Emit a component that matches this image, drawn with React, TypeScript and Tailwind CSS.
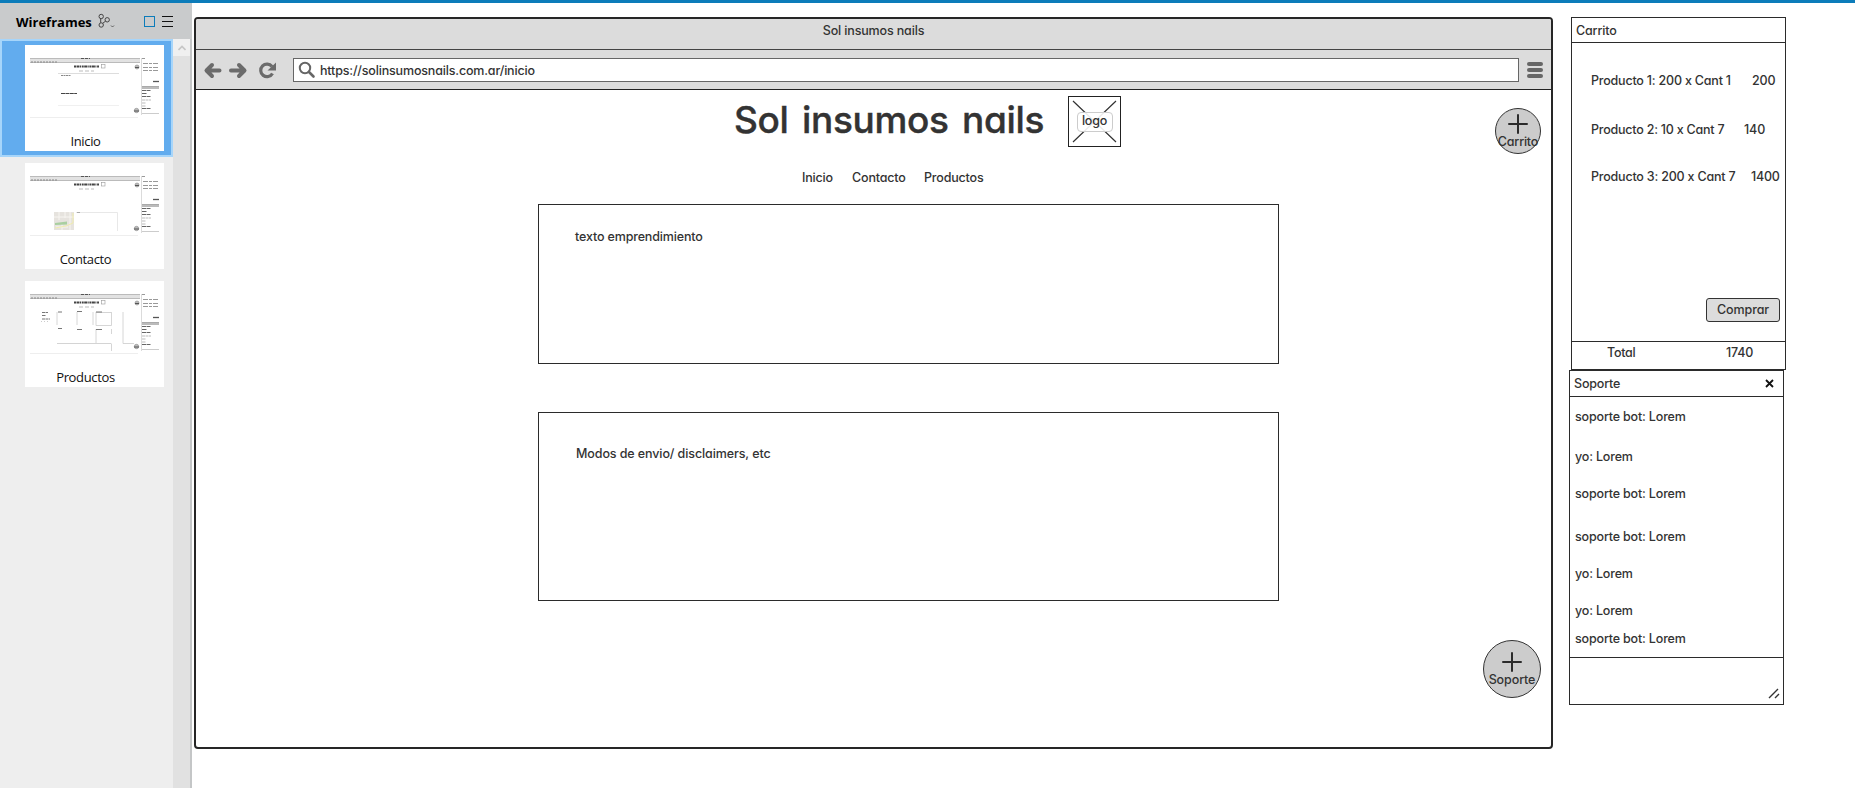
import React from "react";

function Toolbar() {
  return (
    <div className="flex h-[40px] items-center border-b border-[#222] bg-[#dcdcdc] pl-[6px]">
      <svg className="h-[24px] w-[83px] shrink-0" viewBox="0 0 83 24" fill="none" stroke="#6b6b6b">
        <path d="M17.500 12.500H5M10 7L4.500 12.500L10 18" strokeWidth="4" strokeLinecap="round" strokeLinejoin="round" />
        <path d="M29 12.500H42M37 7L42.500 12.500L37 18" strokeWidth="4" strokeLinecap="round" strokeLinejoin="round" />
        <path d="M70.500 15.500A6.300 6.300 0 1 1 70 8.500" strokeWidth="3.200" />
        <path d="M74 4.500V12.500H65.500Z" fill="#6b6b6b" stroke="none" />
      </svg>
      <div className="ml-[8px] flex h-[24px] w-[1226px] items-center border border-[#666] bg-white pl-[4px]">
        <svg className="h-[18px] w-[18px]" viewBox="0 0 18 18" fill="none" stroke="#666">
          <circle cx="7" cy="7" r="5.200" strokeWidth="2" />
          <path d="M11 11L15.500 15.500" strokeWidth="2.600" strokeLinecap="round" />
        </svg>
        <span className="ml-[4px] pt-[2px] tracking-[-0.17px]">https://solinsumosnails.com.ar/inicio</span>
      </div>
      <div className="ml-[8px] flex flex-col gap-[2px]">
        <div className="h-[4px] w-[16px] rounded-full bg-[#666]" />
        <div className="h-[4px] w-[16px] rounded-full bg-[#666]" />
        <div className="h-[4px] w-[16px] rounded-full bg-[#666]" />
      </div>
    </div>
  );
}

function Plus() {
  return (
    <svg className="h-[20px] w-[20px]" viewBox="0 0 20 20" stroke="#2b2b2b" strokeWidth="2" strokeLinecap="round">
      <path d="M10 1V19M1 10H19" />
    </svg>
  );
}

function ThumbFrame({ children }: { children: React.ReactNode }) {
  return (
    <svg className="h-[88px] w-[139px]" viewBox="0 0 139 88" fill="none" stroke="#888" strokeWidth="1">
      <rect x="5" y="13" width="110" height="5" fill="#e2e2e2" stroke="none" />
      <path d="M5 13.500H115M5 17.500H115" stroke="#aaa" strokeWidth="0.700" />
      <path d="M56 13.500H65" stroke="#555" strokeDasharray="3 1" />
      <path d="M6 17H33" stroke="#888" strokeDasharray="2 1" />
      <path d="M49 21.500H74" stroke="#444" strokeWidth="1.800" strokeDasharray="2 .5 3 .5 1 .7" />
      <rect x="76.500" y="19.500" width="3.500" height="3.500" stroke="#999" strokeWidth="0.600" />
      <path d="M54 26H69" stroke="#bbb" strokeDasharray="4 2" />
      <circle cx="112" cy="22" r="2" fill="#bbb" strokeWidth="0.600" />
      <circle cx="111.500" cy="65.500" r="2.200" fill="#bbb" strokeWidth="0.600" />
      <path d="M109 66H114M110 22.500H114" stroke="#555" />
      <path d="M5 72.500H113" stroke="#eee" />
      <path d="M116.500 13V70" stroke="#ccc" strokeWidth="0.700" />
      <path d="M117 13.500H120M118 18.500H134M118 22.500H134M118 25.500H134" stroke="#999" strokeDasharray="5 1 3 1" />
      <path d="M128 36.500H134" stroke="#555" strokeWidth="1.300" />
      <path d="M117 41.500H134" stroke="#aaa" />
      <path d="M117 43H134" stroke="#777" />
      <path d="M117 45.500H126M117 48.500H122M117 51.500H126M117 63.500H126" stroke="#666" strokeDasharray="4 .5" />
      <path d="M117 55H126M117 58H121M117 61H121" stroke="#bbb" strokeDasharray="3 .5" />
      <path d="M117 68.500H134" stroke="#ccc" />
      {children}
    </svg>
  );
}

function ThumbInicio() {
  return (
    <ThumbFrame>
      <path d="M33 28.500H94" stroke="#ddd" />
      <path d="M36 30.500H46" stroke="#888" strokeDasharray="2 .5" />
      <path d="M36 48.500H52" stroke="#444" strokeDasharray="4 .4" />
      <path d="M33 60.500H94" stroke="#f0f0f0" />
    </ThumbFrame>
  );
}

function ThumbContacto() {
  return (
    <ThumbFrame>
      <rect x="29" y="49" width="20" height="18" fill="#e6e3de" stroke="none" />
      <path d="M34 49V57M40 49V55M45 49V67M29 54H49M31 64H43M37 60V67" stroke="#f7f5f1" />
      <path d="M30 60L42 58.500V61.500L30 62Z" fill="#a9cfa0" stroke="none" />
      <path d="M30 65L41 63L48 60V50" stroke="#f0ecae" />
      <path d="M51 49.500H92.500V68" stroke="#e2e2e2" strokeWidth="0.800" />
      <path d="M52 49.500H55" stroke="#aaa" />
    </ThumbFrame>
  );
}

function ThumbProductos() {
  return (
    <ThumbFrame>
      <path d="M17 31.500H23M17 34.500H21M17 38H25" stroke="#777" strokeDasharray="3 .5" />
      <path d="M16 40.500H25" stroke="#ccc" strokeDasharray="1 2" />
      <path d="M32 31V44M52 31V44M68 31V44M71 31V44.500H86.500V31M98 31V62.500H109M71 48V62M86.500 48V53M86.500 62.500V70" stroke="#ccc" strokeWidth="0.800" />
      <path d="M71 31.500H86M32 62.500H86" stroke="#d4d4d4" />
      <path d="M33 31H37M52 30.500H57M71 31H77M33 47.500H37M52 48.500H57M71 48.500H77" stroke="#777" />
    </ThumbFrame>
  );
}

const labelClass = "-ml-[18px] text-center font-['Open_Sans',sans-serif] text-[13px] leading-[16px] tracking-[-0.35px] text-[#111]";

function Sidebar() {
  return (
    <aside className="flex w-[192px] shrink-0 flex-col">
      <header className="flex h-[36px] items-center bg-[#c9cbcc] pl-[16px]">
        <h2 className="w-[77px] pt-px font-['Open_Sans',sans-serif] text-[13px] font-bold leading-[16px] text-black">Wireframes</h2>
        <svg className="ml-[4px] h-[16px] w-[18px]" viewBox="0 0 18 16" fill="none" stroke="#444">
          <circle cx="4.200" cy="3.500" r="2.200" />
          <circle cx="4.200" cy="12" r="2.200" />
          <circle cx="10.200" cy="6.800" r="2.200" />
          <path d="M3.700 5.700V9.800M5.700 10.300L8.500 8.200" />
          <path d="M14 12.500L15.500 14L17 12.500" strokeWidth="0.800" />
        </svg>
        <div className="ml-[29px] h-[11px] w-[11px] border border-[#0c7cba]" />
        <svg className="ml-[7px] h-[12px] w-[11px]" viewBox="0 0 11 12" stroke="#111">
          <path d="M0 1.500H11M0 6.500H11M0 11.500H11" />
        </svg>
      </header>
      <div className="flex grow">
        <div className="w-[173px] bg-[#eeeeee]">
          <div className="h-[118px] border-2 border-[#a6d5fa] bg-[#62acee] pl-[23px] pt-[4px]">
            <div className="h-[106px] w-[139px] bg-white">
              <ThumbInicio />
              <p className={labelClass}>Inicio</p>
            </div>
          </div>
          <div className="ml-[25px] mt-[6px] h-[106px] w-[139px] bg-white">
            <ThumbContacto />
            <p className={labelClass}>Contacto</p>
          </div>
          <div className="ml-[25px] mt-[12px] h-[106px] w-[139px] bg-white">
            <ThumbProductos />
            <p className={labelClass}>Productos</p>
          </div>
        </div>
        <div className="w-[19px] border-r-2 border-[#c4c6c7] bg-[#e1e1e1]">
          <div className="flex h-[17px] items-center justify-center bg-[#f0f0f0]">
            <svg className="h-[6px] w-[8px]" viewBox="0 0 8 6" fill="none" stroke="#c6c6c6" strokeWidth="1.600">
              <path d="M0.500 5L4 1.500L7.500 5" />
            </svg>
          </div>
        </div>
      </div>
    </aside>
  );
}

function Browser() {
  return (
    <main className="relative ml-[2px] mt-[14px] flex h-[732px] w-[1359px] shrink-0 flex-col overflow-hidden rounded-[4px] border-2 border-[#262626] bg-white">
      <div className="h-[31px] border-b border-[#444] bg-[#dcdcdc] pt-[4px] text-center tracking-[-0.15px]">Sol insumos nails</div>
      <Toolbar />
      <div className="flex pl-[538px] pt-[6px]">
        <h1 className="w-[334px] pt-px text-[37px] font-medium leading-[45px] [word-spacing:4px] tracking-[-0.35px] [-webkit-text-stroke:0.4px_#333]">Sol insumos nails</h1>
        <div className="grid h-[51px] w-[53px] border border-[#222]">
          <svg className="col-start-1 row-start-1 h-[49px] w-[51px]" viewBox="0 0 51 49" stroke="#333" strokeWidth="1.200">
            <path d="M4 4L47 45M47 4L4 45" />
          </svg>
          <span className="z-10 col-start-1 row-start-1 flex h-[20px] w-[36px] items-center justify-center place-self-center rounded-[4px] border border-[#ccc] bg-white/90 pb-[2px] tracking-[-0.2px]">logo</span>
        </div>
      </div>
      <nav className="mt-[23px] flex gap-[19px] pl-[606px] tracking-[-0.17px]">
        <span className="w-[31px]">Inicio</span>
        <span className="w-[53px]">Contacto</span>
        <span>Productos</span>
      </nav>
      <section className="ml-[342px] mt-[18px] h-[160px] w-[741px] border border-[#2b2b2b] pl-[36px] pt-[24px] tracking-[-0.15px]">texto emprendimiento</section>
      <section className="ml-[342px] mt-[48px] h-[189px] w-[741px] border border-[#2b2b2b] pl-[37px] pt-[33px] tracking-[-0.1px]">Modos de envio/ disclaimers, etc</section>
      <div className="absolute left-[1299px] top-[89px] flex h-[46px] w-[46px] flex-col items-center rounded-full border border-[#333] bg-[#ccc] pt-[5px]">
        <Plus />
        <span className="tracking-[-0.2px]">Carrito</span>
      </div>
      <div className="absolute left-[1287px] top-[621px] flex h-[58px] w-[58px] flex-col items-center rounded-full border border-[#333] bg-[#ccc] pt-[11px]">
        <Plus />
        <span className="tracking-[-0.1px]">Soporte</span>
      </div>
    </main>
  );
}

function Cart() {
  return (
    <section className="ml-[2px] flex h-[353px] w-[215px] flex-col border border-[#2b2b2b]">
      <h3 className="h-[25px] shrink-0 border-b border-[#2b2b2b] pl-[4px] pt-[5px] tracking-[-0.15px]">Carrito</h3>
      <div className="grow pl-[19px] pt-[30px]">
        <div className="flex h-[49px]"><span className="w-[161px] tracking-[-0.2px]">Producto 1: 200 x Cant 1</span><span className="tracking-[-0.1px]">200</span></div>
        <div className="flex h-[47px]"><span className="w-[153px] tracking-[-0.22px]">Producto 2: 10 x Cant 7</span><span className="tracking-[-0.1px]">140</span></div>
        <div className="flex h-[16px]"><span className="w-[160px] tracking-[-0.2px]">Producto 3: 200 x Cant 7</span><span className="tracking-[-0.2px]">1400</span></div>
      </div>
      <button className="mb-[19px] ml-[134px] flex h-[24px] w-[74px] shrink-0 items-center justify-center rounded-[3px] border border-[#333] bg-[#dcdcdc] tracking-[-0.1px]">Comprar</button>
      <div className="flex h-[28px] shrink-0 border-t border-[#2b2b2b] pl-[35px] pt-[3px]">
        <span className="w-[119px] tracking-[-0.3px]">Total</span>
        <span className="tracking-[-0.2px]">1740</span>
      </div>
    </section>
  );
}

function Support() {
  return (
    <section className="flex h-[335px] w-[215px] flex-col border border-[#2b2b2b] tracking-[-0.17px]">
      <h3 className="flex h-[26px] shrink-0 items-center justify-between border-b border-[#2b2b2b] pl-[4px] pr-[9px]">
        <span>Soporte</span>
        <svg className="h-[9px] w-[9px]" viewBox="0 0 9 9" stroke="#111" strokeWidth="1.800">
          <path d="M1 1L8 8M8 1L1 8" />
        </svg>
      </h3>
      <div className="grow pl-[5px] pt-[12px]">
        <p className="h-[40px]">soporte bot: Lorem</p>
        <p className="h-[37px]">yo: Lorem</p>
        <p className="h-[43px]">soporte bot: Lorem</p>
        <p className="h-[37px]">soporte bot: Lorem</p>
        <p className="h-[37px]">yo: Lorem</p>
        <p className="h-[28px]">yo: Lorem</p>
        <p className="h-[16px]">soporte bot: Lorem</p>
      </div>
      <div className="flex h-[47px] shrink-0 items-end justify-end border-t border-[#2b2b2b] pb-[5px] pr-[3px]">
        <svg className="h-[11px] w-[12px]" viewBox="0 0 12 11" stroke="#333" strokeWidth="1.400">
          <path d="M1 10L10 1M7 10L11 6" />
        </svg>
      </div>
    </section>
  );
}

export default function App() {
  return (
    <div className="flex h-[788px] w-[1855px] flex-col overflow-hidden bg-white font-['Inter',sans-serif] text-[12.5px] leading-[16px] text-[#333] [font-feature-settings:'cv11'] [font-weight:450]">
      <div className="h-[3px] shrink-0 bg-[#0c7cba]" />
      <div className="flex grow">
        <Sidebar />
        <Browser />
        <div className="ml-[16px] mt-[14px] flex flex-col">
          <Cart />
          <Support />
        </div>
      </div>
    </div>
  );
}
